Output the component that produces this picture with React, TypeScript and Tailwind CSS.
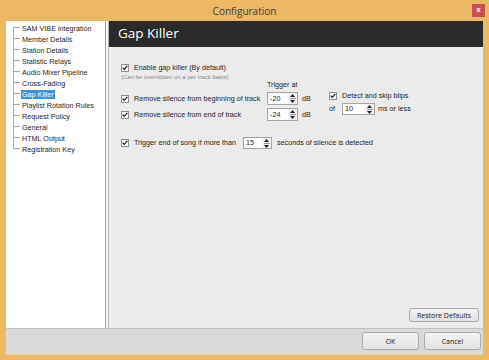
import React from 'react';

const treeItems = [
  'SAM VIBE integration',
  'Member Details',
  'Station Details',
  'Statistic Relays',
  'Audio Mixer Pipeline',
  'Cross-Fading',
  'Gap Killer',
  'Playlist Rotation Rules',
  'Request Policy',
  'General',
  'HTML Output',
  'Registration Key',
];

function Check() {
  return (
    <span className="flex h-[8px] w-[8px] shrink-0 items-center justify-center border border-[#8e8f8f] bg-white">
      <svg width="6" height="6" viewBox="0 0 6 6">
        <path d="M0.6 2.6 L2.3 4.4 L5.4 0.9" stroke="#1d1d1d" strokeWidth="1.3" fill="none" />
      </svg>
    </span>
  );
}

function Spin({ value, w, h }: { value: string; w: string; h: string }) {
  return (
    <div className={`flex shrink-0 border border-[#a5a5a5] bg-white ${w} ${h}`}>
      <span className="flex flex-1 items-center pl-[2px]">{value}</span>
      <div className="flex w-[9px] flex-col items-center justify-center gap-[1px] bg-[#f1f1f1]">
        <svg width="5" height="3" viewBox="0 0 5 3">
          <path d="M2.5 0 L5 3 L0 3 Z" fill="#222" />
        </svg>
        <span className="h-px w-[6px] bg-[#9a9a9a]" />
        <svg width="5" height="3" viewBox="0 0 5 3">
          <path d="M0 0 L5 0 L2.5 3 Z" fill="#222" />
        </svg>
      </div>
    </div>
  );
}

const btn =
  'flex items-center justify-center rounded-[3px] border border-[#acacac] bg-linear-to-b from-[#f3f3f3] to-[#e2e2e2] font-["Open_Sans",sans-serif] text-[7px] text-[#222]';

export default function App() {
  return (
    <div className="flex h-[360px] w-[489px] flex-col bg-[#ecb865] font-['Liberation_Sans',Arial,sans-serif] text-[7.2px] leading-none text-[#262626]">
      {/* Title bar */}
      <div className="grid h-[21px] shrink-0 grid-cols-[1fr_auto_1fr] items-center">
        <div />
        <div className="font-['Open_Sans',sans-serif] text-[10px] text-[#404040]">Configuration</div>
        <div className="flex justify-end pr-[4px]">
          <div className="flex h-[13px] w-[13px] items-center justify-center bg-[#c75050] pb-px text-[8px] font-bold text-white">x</div>
        </div>
      </div>

      <div className="mx-[6px] flex flex-col">
        <div className="flex h-[307px]">
          {/* Tree */}
          <div className="flex w-[100px] flex-col border-r border-[#a3a3a3] bg-white pt-[2px]">
            {treeItems.map((t, i) => {
              const last = i === treeItems.length - 1;
              const sel = t === 'Gap Killer';
              return (
                <div key={t} className="flex h-[11px] items-center">
                  <div className="ml-[7px] flex h-[11px] w-[7px] flex-col">
                    <div className={`h-[5px] border-b border-[#a8a8a8] ${i === 0 ? '' : 'border-l'}`} />
                    <div className={`flex-1 border-[#a8a8a8] ${last ? '' : 'border-l'}`} />
                  </div>
                  <span className={`ml-px px-[1px] py-[1px] ${sel ? 'bg-[#3d8fe0] text-white' : ''}`}>{t}</span>
                </div>
              );
            })}
          </div>
          <div className="w-[2px] bg-[#f4f4f4]" />

          {/* Panel */}
          <div className="flex flex-1 flex-col border-l border-[#b9b9b9] bg-[#ebebeb]">
            <div className="flex h-[26px] items-center bg-[#2b2b2b] pl-[9px] font-['Open_Sans',sans-serif] text-[13.5px] text-white">
              Gap Killer
            </div>

            <div className="flex flex-col pl-[12px]">
              <div className="mt-[16px] flex h-[10px] items-center gap-[5px]">
                <Check />
                <span>Enable gap killer (By default)</span>
              </div>
              <div className="mt-[1px] h-[7px] text-[6px] leading-[7px] text-[#8c8c8c]">
                (Can be overridden on a per track basis)
              </div>

              <div className="flex">
                <div className="flex w-[208px] flex-col">
                  <div className="h-[8px] pl-[146px] leading-[8px]">Trigger at</div>
                  <div className="mt-[3px] flex h-[13px] items-center">
                    <div className="flex w-[146px] items-center gap-[5px]">
                      <Check />
                      <span>Remove silence from beginning of track</span>
                    </div>
                    <Spin value="-20" w="w-[31px]" h="h-[13px]" />
                    <span className="ml-[4px]">dB</span>
                  </div>
                  <div className="mt-[3px] flex h-[13px] items-center">
                    <div className="flex w-[146px] items-center gap-[5px]">
                      <Check />
                      <span>Remove silence from end of track</span>
                    </div>
                    <Spin value="-24" w="w-[31px]" h="h-[13px]" />
                    <span className="ml-[4px]">dB</span>
                  </div>
                </div>

                <div className="flex flex-col">
                  <div className="mt-[10px] flex h-[10px] items-center gap-[5px]">
                    <Check />
                    <span>Detect and skip blips</span>
                  </div>
                  <div className="mt-[2px] flex h-[12px] items-center">
                    <span className="w-[13px]">of</span>
                    <Spin value="10" w="w-[33px]" h="h-[12px]" />
                    <span className="ml-[3px]">ms or less</span>
                  </div>
                </div>
              </div>

              <div className="mt-[16px] flex h-[12px] items-center">
                <div className="flex w-[122px] items-center gap-[5px]">
                  <Check />
                  <span>Trigger end of song if more than</span>
                </div>
                <Spin value="15" w="w-[29px]" h="h-[12px]" />
                <span className="ml-[5px]">seconds of silence is detected</span>
              </div>
            </div>

            <div className="mt-auto mb-[6px] mr-[4px] flex justify-end">
              <button className={`${btn} h-[14px] w-[70px]`}>Restore Defaults</button>
            </div>
          </div>
        </div>

        {/* Bottom buttons */}
        <div className="flex h-[25px] items-center justify-end gap-[5px] border-t border-[#c2c2c2] bg-[#d9d9d9] pr-[2px]">
          <button className={`${btn} h-[18px] w-[57px]`}>OK</button>
          <button className={`${btn} h-[18px] w-[57px]`}>Cancel</button>
        </div>
      </div>
      <div className="mx-[6px] h-[2px] bg-[#e6d4b5]" />
    </div>
  );
}
